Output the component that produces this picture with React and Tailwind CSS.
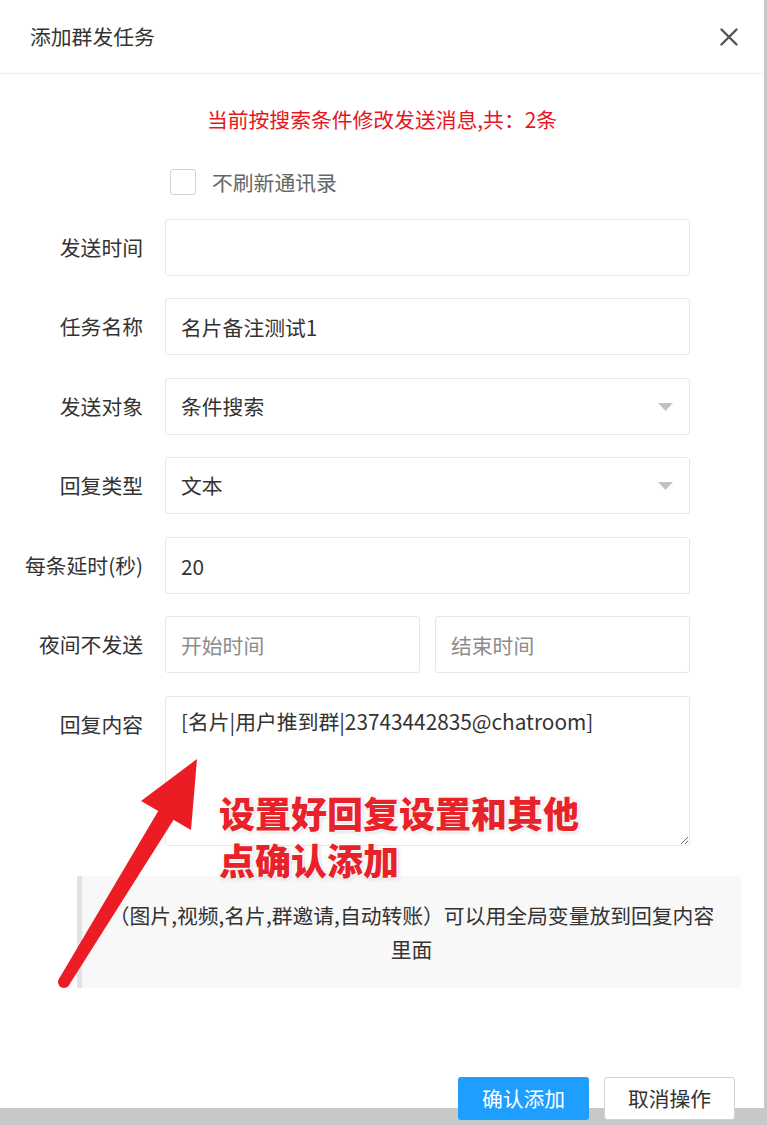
import { useState } from 'react';

const rows = [
  { label: '发送时间', type: 'input', value: '' },
  { label: '任务名称', type: 'input', value: '名片备注测试1' },
  { label: '发送对象', type: 'select', value: '条件搜索' },
  { label: '回复类型', type: 'select', value: '文本' },
  { label: '每条延时(秒)', type: 'input', value: '20' },
  { label: '夜间不发送', type: 'range' },
];

const gaps = ['mt-[24px]', 'mt-[22px]', 'mt-[23px]', 'mt-[22px]', 'mt-[23px]', 'mt-[22px]'];

const inputCls =
  'h-[57px] w-full rounded-[3px] border border-[#e6e6e6] bg-white px-[15px] text-[20.8px] text-[#333] outline-none placeholder:text-[#8c8c8c]';

const Label = ({ children }) => (
  <div className="flex h-[57px] w-[143px] shrink-0 items-center justify-end whitespace-nowrap text-[20.8px] text-[#333]">
    {children}
  </div>
);

const SelectBox = ({ value }) => (
  <div className="flex h-[57px] w-full items-center justify-between rounded-[3px] border border-[#e6e6e6] bg-white pl-[15px] pr-[16px] text-[20.8px] text-[#333]">
    <span>{value}</span>
    <svg width="15" height="8" viewBox="0 0 15 8">
      <path d="M0 0 H15 L7.5 8 Z" fill="#c2c2c2" />
    </svg>
  </div>
);

const App = () => {
  const [checked, setChecked] = useState(false);

  return (
    <div className="relative h-[1125px] w-[767px] overflow-hidden bg-[#c8c8c8] font-['Microsoft_YaHei','Noto_Sans_CJK_SC',sans-serif]">
      <div className="flex h-[1108px] w-[764px] flex-col bg-white">
        {/* header */}
        <div className="flex h-[74px] shrink-0 items-center justify-between border-b border-[#eeeeee] pl-[30px] pr-[26px]">
          <span className="text-[20.8px] text-[#333]">添加群发任务</span>
          <svg width="18" height="18" viewBox="0 0 18 18">
            <path d="M1.5 1.5 L16.5 16.5 M16.5 1.5 L1.5 16.5" stroke="#555" strokeWidth="2.4" strokeLinecap="round" />
          </svg>
        </div>

        <p className="mt-[30px] shrink-0 text-center text-[20.8px] leading-[30px] text-[#e5161e]">
          当前按搜索条件修改发送消息,共：2条
        </p>

        <div className="mt-[35px] flex shrink-0 items-center gap-[16px] pl-[170px]">
          <button
            onClick={() => setChecked(!checked)}
            className="h-[26px] w-[26px] rounded-[3px] border border-[#d2d2d2] bg-white"
          />
          <span className="text-[20.8px] leading-[26px] text-[#666]">不刷新通讯录</span>
        </div>

        {rows.map((row, i) => (
          <div key={row.label} className={`${gaps[i]} flex shrink-0 items-center`}>
            <Label>{row.label}</Label>
            <div className="ml-[22px] flex w-[525px] gap-[15px]">
              {row.type === 'input' && <input className={inputCls} defaultValue={row.value} />}
              {row.type === 'select' && <SelectBox value={row.value} />}
              {row.type === 'range' && (
                <>
                  <input className={inputCls} placeholder="开始时间" />
                  <input className={inputCls} placeholder="结束时间" />
                </>
              )}
            </div>
          </div>
        ))}

        <div className="mt-[23px] flex shrink-0 items-start">
          <Label>回复内容</Label>
          <textarea
            className="ml-[22px] h-[150px] w-[525px] resize-y rounded-[3px] border border-[#e6e6e6] bg-white px-[15px] pt-[8px] text-[20.8px] leading-[32px] text-[#333] outline-none"
            defaultValue="[名片|用户推到群|23743442835@chatroom]"
          />
        </div>

        <div className="mt-[30px] mr-[23px] ml-[77px] shrink-0 border-l-[5px] border-[#e2e2e2] bg-[#f8f8f8] px-[24px] py-[22px] text-center text-[20.8px] leading-[34px] text-[#333]">
          （图片,视频,名片,群邀请,自动转账）可以用全局变量放到回复内容里面
        </div>

        <div className="mt-[89px] flex shrink-0 justify-end gap-[15px] pr-[29px]">
          <button className="h-[43px] w-[131px] rounded-[3px] bg-[#1e9fff] text-[20.8px] text-white">确认添加</button>
          <button className="h-[43px] w-[131px] rounded-[3px] border border-[#d2d2d2] bg-white text-[20.8px] text-[#333]">
            取消操作
          </button>
        </div>
      </div>

      {/* annotation arrow */}
      <svg className="pointer-events-none absolute left-0 top-0" width="767" height="1125" viewBox="0 0 767 1125">
        <polygon points="175.7,816.6 160.3,807.4 58.9,978.9 69.1,985.1" fill="#ec1c24" />
        <circle cx="64" cy="982" r="6" fill="#ec1c24" />
        <polygon points="197,759 141,801 191,830" fill="#ec1c24" />
      </svg>

      <div className="pointer-events-none absolute left-[219px] top-[789px] text-[36px] font-black leading-[47px] text-[#e8222b] [text-shadow:0_0_2px_#fff,1px_1px_2px_#fff,-1px_-1px_2px_#fff,1px_1px_4px_rgba(0,0,0,0.25)]">
        <div>设置好回复设置和其他</div>
        <div>点确认添加</div>
      </div>
    </div>
  );
};

export default App;
